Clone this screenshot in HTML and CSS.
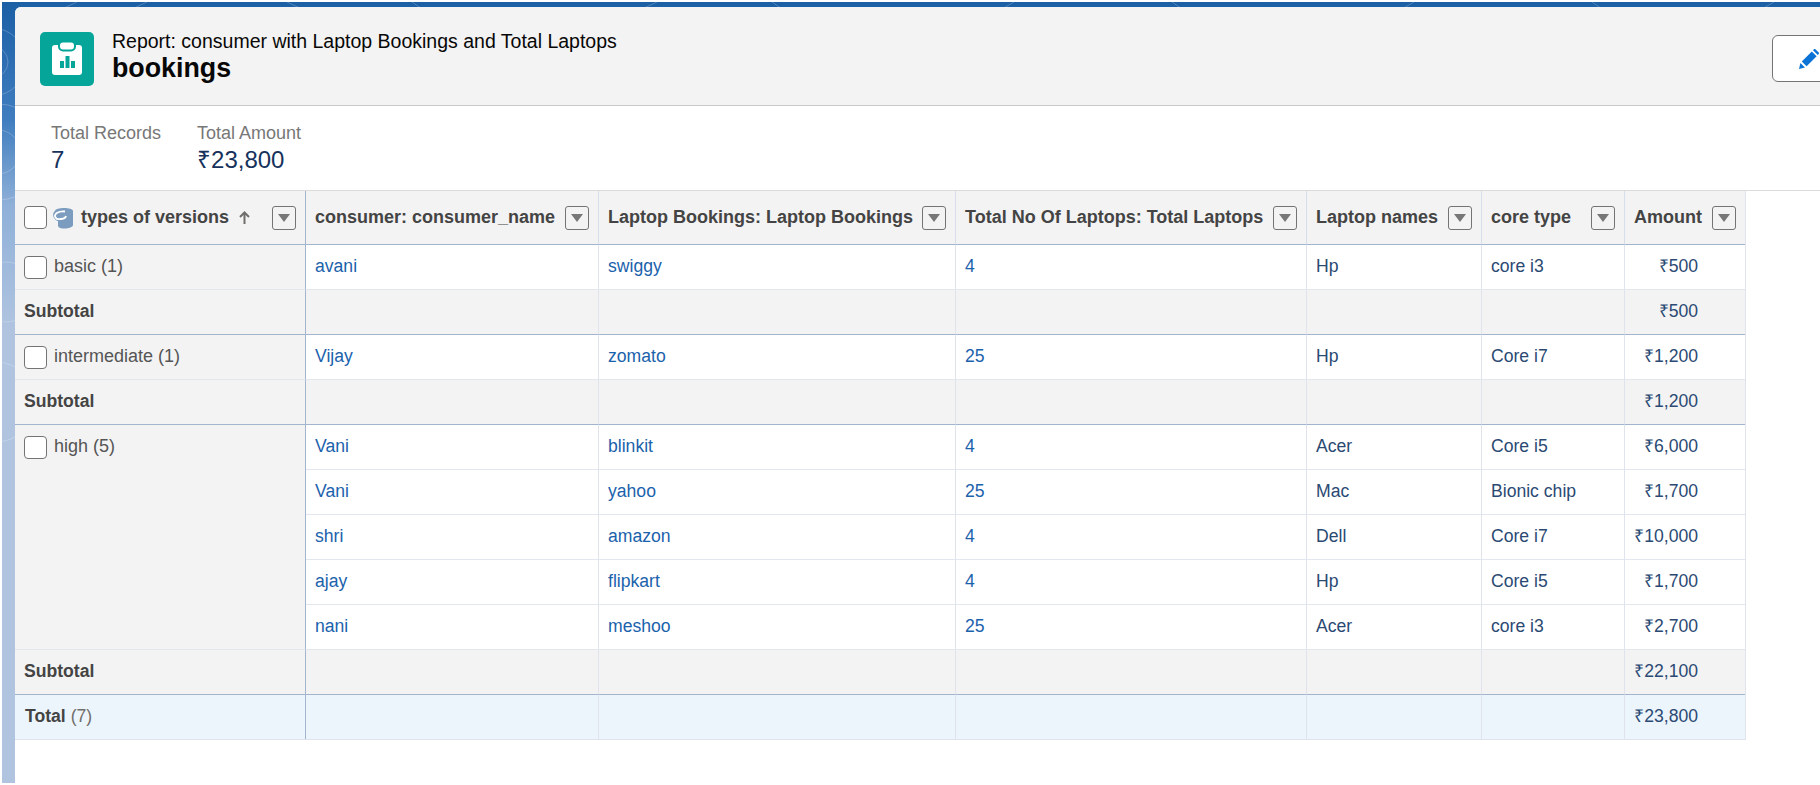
FILE: index.html
```html
<!DOCTYPE html>
<html lang="en">
<head>
	<meta charset="UTF-8">
	<title>bookings</title>
	<link rel="stylesheet" href="styles.css">
</head>
<body>
	<div class="app">
		<svg class="backdrop" width="1818" height="781" viewBox="0 0 1818 781" fill="none" stroke="#fff" stroke-opacity=".22">
			<circle cx="-10" cy="60" r="16"/>
			<circle cx="-10" cy="60" r="34"/>
			<circle cx="-4" cy="150" r="22"/>
			<circle cx="-4" cy="150" r="48"/>
			<circle cx="4" cy="290" r="30"/>
			<circle cx="-6" cy="400" r="40"/>
			<path d="M60 7 75 0M130 7 145 0M300 7 285 0M420 7 410 0M640 7 655 0M780 7 770 0M1000 7 1012 0M1180 7 1170 0M1400 7 1412 0M1600 7 1590 0M1760 7 1772 0"/>
		</svg>
		<div class="panel">
			<header class="report-head">
				<svg class="report-icon" width="54" height="54" viewBox="0 0 54 54">
					<rect width="54" height="54" rx="5" fill="#06a59a"/>
					<rect x="12" y="13" width="30" height="30" rx="3" fill="#fff"/>
					<rect x="19" y="9.5" width="16" height="9" rx="4" fill="#fff" stroke="#06a59a" stroke-width="2"/>
					<path d="M20 29h4v7h-4zM25.500 24h4v12h-4zM31 29h4v7h-4z" fill="#06a59a"/>
				</svg>
				<div class="report-title">
					<div class="report-type">Report: consumer with Laptop Bookings and Total Laptops</div>
					<h1>bookings</h1>
				</div>
				<button class="edit-btn" type="button">
					<svg width="20" height="20" viewBox="0 0 20 20" fill="#0b72d6">
						<path d="M0 20l1.400-6 4.600 4.600z"/>
						<path d="M2.800 12.400 12.800 2.400l4.800 4.800-10 10z"/>
						<path d="M14 1.200 15 .3c.4-.4 1-.4 1.400 0l3.300 3.300c.4.4.4 1 0 1.400l-.9 1z"/>
					</svg>
				</button>
			</header>

			<section class="stats">
				<div class="stat">
					<div class="stat-label">Total Records</div>
					<div class="stat-value">7</div>
				</div>
				<div class="stat">
					<div class="stat-label">Total Amount</div>
					<div class="stat-value">₹23,800</div>
				</div>
			</section>

			<div class="table-wrap">
				<table class="report">
					<colgroup>
						<col class="col-group">
						<col class="col-consumer">
						<col class="col-booking">
						<col class="col-total">
						<col class="col-name">
						<col class="col-core">
						<col class="col-amount">
					</colgroup>
					<thead>
						<tr>
							<th class="group-cell">
								<div class="th-inner">
									<span class="check"></span>
									<svg class="field-icon" width="22" height="22" viewBox="0 0 22 22">
										<path d="M3 4C3 0 21 0 21 4v14c0 4-14 5-15 1v-5C2 13-1 7 3 4z" fill="#7b9cbf"/>
										<path d="M13 4.500C7 3.500 1.500 7 3.500 10.500c1.500 3 10 1.500 10.500-1.500" fill="none" stroke="#fff" stroke-width="1.800"/>
									</svg>
									<span class="th-label">types of versions</span>
									<svg class="sort-arrow" width="11" height="13" viewBox="0 0 11 13" fill="none" stroke="#706e6b" stroke-width="2">
										<path d="M5.500 13V2M1 6l4.500-4.500L10 6"/>
									</svg>
									<button class="filter-btn" type="button"></button>
								</div>
							</th>
							<th><div class="th-inner"><span class="th-label">consumer: consumer_name</span><button class="filter-btn" type="button"></button></div></th>
							<th><div class="th-inner"><span class="th-label">Laptop Bookings: Laptop Bookings</span><button class="filter-btn" type="button"></button></div></th>
							<th><div class="th-inner"><span class="th-label">Total No Of Laptops: Total Laptops</span><button class="filter-btn" type="button"></button></div></th>
							<th><div class="th-inner"><span class="th-label">Laptop names</span><button class="filter-btn" type="button"></button></div></th>
							<th><div class="th-inner"><span class="th-label">core type</span><button class="filter-btn" type="button"></button></div></th>
							<th><div class="th-inner"><span class="th-label">Amount</span><button class="filter-btn" type="button"></button></div></th>
						</tr>
					</thead>
					<tbody>
						<tr>
							<td class="group-cell"><div class="group-label"><span class="check"></span>basic (1)</div></td>
							<td><a href="#">avani</a></td>
							<td><a href="#">swiggy</a></td>
							<td><a href="#">4</a></td>
							<td>Hp</td>
							<td>core i3</td>
							<td class="num">₹500</td>
						</tr>
						<tr class="subtotal">
							<td class="group-cell">Subtotal</td>
							<td></td><td></td><td></td><td></td><td></td>
							<td class="num">₹500</td>
						</tr>
						<tr>
							<td class="group-cell"><div class="group-label"><span class="check"></span>intermediate (1)</div></td>
							<td><a href="#">Vijay</a></td>
							<td><a href="#">zomato</a></td>
							<td><a href="#">25</a></td>
							<td>Hp</td>
							<td>Core i7</td>
							<td class="num">₹1,200</td>
						</tr>
						<tr class="subtotal">
							<td class="group-cell">Subtotal</td>
							<td></td><td></td><td></td><td></td><td></td>
							<td class="num">₹1,200</td>
						</tr>
						<tr>
							<td class="group-cell group-top" rowspan="5"><div class="group-label"><span class="check"></span>high (5)</div></td>
							<td><a href="#">Vani</a></td>
							<td><a href="#">blinkit</a></td>
							<td><a href="#">4</a></td>
							<td>Acer</td>
							<td>Core i5</td>
							<td class="num">₹6,000</td>
						</tr>
						<tr>
							<td><a href="#">Vani</a></td>
							<td><a href="#">yahoo</a></td>
							<td><a href="#">25</a></td>
							<td>Mac</td>
							<td>Bionic chip</td>
							<td class="num">₹1,700</td>
						</tr>
						<tr>
							<td><a href="#">shri</a></td>
							<td><a href="#">amazon</a></td>
							<td><a href="#">4</a></td>
							<td>Dell</td>
							<td>Core i7</td>
							<td class="num">₹10,000</td>
						</tr>
						<tr>
							<td><a href="#">ajay</a></td>
							<td><a href="#">flipkart</a></td>
							<td><a href="#">4</a></td>
							<td>Hp</td>
							<td>Core i5</td>
							<td class="num">₹1,700</td>
						</tr>
						<tr>
							<td><a href="#">nani</a></td>
							<td><a href="#">meshoo</a></td>
							<td><a href="#">25</a></td>
							<td>Acer</td>
							<td>core i3</td>
							<td class="num">₹2,700</td>
						</tr>
						<tr class="subtotal">
							<td class="group-cell">Subtotal</td>
							<td></td><td></td><td></td><td></td><td></td>
							<td class="num">₹22,100</td>
						</tr>
						<tr class="grand-total">
							<td class="group-cell"><b>Total</b> <span class="count">(7)</span></td>
							<td></td><td></td><td></td><td></td><td></td>
							<td class="num">₹23,800</td>
						</tr>
					</tbody>
				</table>
			</div>
		</div>
	</div>
</body>
</html>
```

FILE: styles.css
```css
*{margin: 0;padding: 0;box-sizing: border-box;}
html,body{height: 100%;overflow: hidden;background: #fff;}
body{
	font-family: "Liberation Sans", Arial, sans-serif;
	font-size: 17.6px;
	color: #3e3e3c;
	padding: 2px 0 2px 2px;
}
.app{
	position: relative;
	height: 781px;
	padding: 5px 0 0 13px;
	background: linear-gradient(180deg, #1b5fa5 0%, #3f7dbf 15%, #8fb0d8 26%, #b0c4e0 42%, #b0c4df 100%);
	overflow: hidden;
}
.backdrop{
	position: absolute;
	top: 0;
	left: 0;
}
.panel{
	position: relative;
	height: 100%;
	background: #fff;
	border-radius: 6px 0 0 0;
}

/* header */
.report-head{
	display: flex;
	align-items: flex-start;
	height: 99px;
	padding: 25px 0 0 25px;
	background: #f3f3f3;
	border-bottom: 1px solid #c9c9c9;
	border-radius: 6px 0 0 0;
	overflow: hidden;
}
.report-icon{flex: none;}
.report-title{
	margin-left: 18px;
	margin-top: -3px;
	color: #080707;
}
.report-type{
	font-size: 19.5px;
	line-height: 24px;
}
.report-title h1{
	font-size: 26.8px;
	line-height: 30px;
	font-weight: bold;
}
.edit-btn{
	display: flex;
	align-items: center;
	flex: none;
	width: 60px;
	height: 47px;
	margin: 3px -12px 0 auto;
	padding-left: 26px;
	background: #fff;
	border: 1px solid #747474;
	border-radius: 6px;
}

/* stats */
.stats{
	display: flex;
	gap: 36px;
	height: 84px;
	padding: 16px 0 0 36px;
}
.stat-label{
	font-size: 18px;
	line-height: 22px;
	color: #777;
}
.stat-value{
	font-size: 24px;
	line-height: 32px;
	color: #16325c;
}

/* table */
.table-wrap{border-top: 1px solid #dddbda;}
.report{
	table-layout: fixed;
	width: 1731px;
	border-collapse: separate;
	border-spacing: 0;
	border-right: 1px solid #dfe4ec;
	border-bottom: 1px solid #dfe4ec;
}
.col-group{width: 291px;}
.col-consumer{width: 293px;}
.col-booking{width: 357px;}
.col-total{width: 351px;}
.col-name{width: 175px;}
.col-core{width: 143px;}
.col-amount{width: 120px;}

th{
	height: 54px;
	padding: 0 9px;
	text-align: left;
	background: #f3f3f3;
	border-right: 1px solid #d5deea;
	border-bottom: 1px solid #a3b5cd;
}
th:last-child, td:last-child{border-right: none;}
.th-inner{
	display: flex;
	align-items: center;
}
.th-label{font-size: 18px;font-weight: bold;white-space: nowrap;color: #444;}
.filter-btn{
	position: relative;
	flex: none;
	width: 24px;
	height: 24px;
	margin-left: auto;
	background: #f3f3f3;
	border: 1px solid #747474;
	border-radius: 3px;
}
.filter-btn:after{
	content: "";
	position: absolute;
	top: 7px;
	left: 5px;
	border-left: 6px solid transparent;
	border-right: 6px solid transparent;
	border-top: 8px solid #777;
}
.check{
	display: inline-block;
	flex: none;
	width: 23px;
	height: 23px;
	background: #fff;
	border: 1px solid #747474;
	border-radius: 4px;
}
.field-icon{flex: none;margin: 0 7px 0 5px;}
.sort-arrow{flex: none;margin-left: 10px;}

td{
	height: 45px;
	padding: 0 9px 2px;
	color: #2b4a73;
	white-space: nowrap;
	background: #fff;
	border-right: 1px solid #dfe4ec;
	border-bottom: 1px solid #e2e6ee;
}
td a{color: #1b62ac;text-decoration: none;}
td.num{text-align: right;padding: 0 47px 4px 9px;}
.group-cell{
	background: #f3f3f3;
	color: #444;
}
th.group-cell, td.group-cell{border-right-color: #a3b5cd;}
.group-top{vertical-align: top;padding-top: 8px;}
.group-label{
	display: flex;
	align-items: center;
	gap: 7px;
	font-size: 18px;
	color: #555;
}
.group-label .check{margin-top: 3px;}
.subtotal td{
	background: #f3f3f3;
	border-bottom-color: #a3b5cd;
}
.subtotal td.group-cell{font-weight: bold;}
.grand-total td{
	height: 44px;
	background: #ecf5fc;
	border-bottom: none;
}
.grand-total td.group-cell{padding-left: 10px;}
.count{color: #706e6b;}
```
